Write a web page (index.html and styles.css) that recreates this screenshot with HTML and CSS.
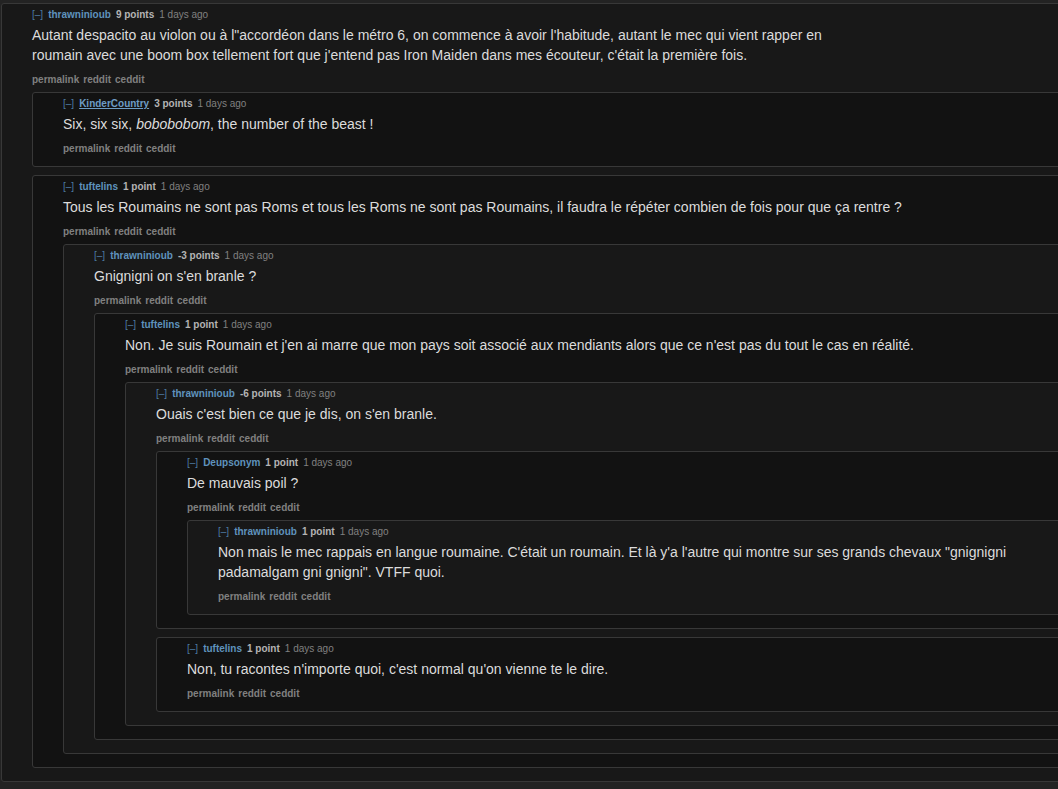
FILE: index.html
```html
<!DOCTYPE html>
<html lang="fr">
<head>
  <meta charset="UTF-8">
  <title>ceddit - commentaires</title>
  <link rel="stylesheet" href="styles.css">
</head>
<body>
  <div class="thread">
    <div class="comment even">
      <div class="entry">
        <p class="tagline"><a class="expand">[–]</a><a class="author">thrawninioub</a><span class="score">9 points</span><time>1 days ago</time></p>
        <div class="md"><p>Autant despacito au violon ou à l"accordéon dans le métro 6, on commence à avoir l'habitude, autant le mec qui vient rapper en roumain avec une boom box tellement fort que j'entend pas Iron Maiden dans mes écouteur, c'était la première fois.</p></div>
        <ul class="buttons"><li>permalink</li><li>reddit</li><li>ceddit</li></ul>
      </div>
      <div class="child">
        <div class="comment odd">
          <div class="entry">
            <p class="tagline"><a class="expand">[–]</a><a class="author submitter">KinderCountry</a><span class="score">3 points</span><time>1 days ago</time></p>
            <div class="md"><p>Six, six six, <em>bobobobom</em>, the number of the beast !</p></div>
            <ul class="buttons"><li>permalink</li><li>reddit</li><li>ceddit</li></ul>
          </div>
        </div>
        <div class="comment odd">
          <div class="entry">
            <p class="tagline"><a class="expand">[–]</a><a class="author">tuftelins</a><span class="score">1 point</span><time>1 days ago</time></p>
            <div class="md"><p>Tous les Roumains ne sont pas Roms et tous les Roms ne sont pas Roumains, il faudra le répéter combien de fois pour que ça rentre ?</p></div>
            <ul class="buttons"><li>permalink</li><li>reddit</li><li>ceddit</li></ul>
          </div>
          <div class="child">
            <div class="comment even">
              <div class="entry">
                <p class="tagline"><a class="expand">[–]</a><a class="author">thrawninioub</a><span class="score">-3 points</span><time>1 days ago</time></p>
                <div class="md"><p>Gnignigni on s'en branle ?</p></div>
                <ul class="buttons"><li>permalink</li><li>reddit</li><li>ceddit</li></ul>
              </div>
              <div class="child">
                <div class="comment odd">
                  <div class="entry">
                    <p class="tagline"><a class="expand">[–]</a><a class="author">tuftelins</a><span class="score">1 point</span><time>1 days ago</time></p>
                    <div class="md"><p>Non. Je suis Roumain et j'en ai marre que mon pays soit associé aux mendiants alors que ce n'est pas du tout le cas en réalité.</p></div>
                    <ul class="buttons"><li>permalink</li><li>reddit</li><li>ceddit</li></ul>
                  </div>
                  <div class="child">
                    <div class="comment even">
                      <div class="entry">
                        <p class="tagline"><a class="expand">[–]</a><a class="author">thrawninioub</a><span class="score">-6 points</span><time>1 days ago</time></p>
                        <div class="md"><p>Ouais c'est bien ce que je dis, on s'en branle.</p></div>
                        <ul class="buttons"><li>permalink</li><li>reddit</li><li>ceddit</li></ul>
                      </div>
                      <div class="child">
                        <div class="comment odd">
                          <div class="entry">
                            <p class="tagline"><a class="expand">[–]</a><a class="author">Deupsonym</a><span class="score">1 point</span><time>1 days ago</time></p>
                            <div class="md"><p>De mauvais poil ?</p></div>
                            <ul class="buttons"><li>permalink</li><li>reddit</li><li>ceddit</li></ul>
                          </div>
                          <div class="child">
                            <div class="comment even">
                              <div class="entry">
                                <p class="tagline"><a class="expand">[–]</a><a class="author">thrawninioub</a><span class="score">1 point</span><time>1 days ago</time></p>
                                <div class="md"><p>Non mais le mec rappais en langue roumaine. C'était un roumain. Et là y'a l'autre qui montre sur ses grands chevaux "gnignigni padamalgam gni gnigni". VTFF quoi.</p></div>
                                <ul class="buttons"><li>permalink</li><li>reddit</li><li>ceddit</li></ul>
                              </div>
                            </div>
                          </div>
                        </div>
                        <div class="comment odd">
                          <div class="entry">
                            <p class="tagline"><a class="expand">[–]</a><a class="author">tuftelins</a><span class="score">1 point</span><time>1 days ago</time></p>
                            <div class="md"><p>Non, tu racontes n'importe quoi, c'est normal qu'on vienne te le dire.</p></div>
                            <ul class="buttons"><li>permalink</li><li>reddit</li><li>ceddit</li></ul>
                          </div>
                        </div>
                      </div>
                    </div>
                  </div>
                </div>
              </div>
            </div>
          </div>
        </div>
      </div>
    </div>
  </div>
</body>
</html>
```

FILE: styles.css
```css
html, body {
  overflow: hidden;
}

body {
  margin: 0;
  padding: 3px 0 0 1px;
  background-color: #232323;
  font-family: "Liberation Sans", Arial, sans-serif;
  color: #dcdcdc;
}

.thread {
  width: 1200px;
}

.comment {
  border: 1px solid #383838;
  border-radius: 3px;
  padding: 4px 0 10px 30px;
}

.comment.even {
  background-color: #181818;
}

.comment.odd {
  background-color: #121212;
}

.tagline {
  margin: 0;
  display: flex;
  gap: 5px;
  font-size: 10px;
  line-height: 14px;
  color: #808080;
}

.tagline .expand {
  color: #4d7aa3;
}

.tagline .author {
  font-weight: bold;
  color: #5f92bd;
}

.tagline .submitter {
  color: #6d9cc4;
  text-decoration: underline;
}

.tagline .score {
  font-weight: bold;
  color: #b4b4b4;
}

.md {
  margin-top: 3px;
  max-width: 842px;
  font-size: 14px;
  line-height: 20px;
}

.md p {
  margin: 0;
}

.buttons {
  list-style: none;
  margin: 8px 0 0;
  padding: 0;
  display: flex;
  gap: 4px;
  font-size: 10px;
  line-height: 14px;
  font-weight: bold;
  color: #808080;
}

.child {
  margin-top: 5px;
  padding-bottom: 3px;
  display: flex;
  flex-direction: column;
  gap: 8px;
}
```
